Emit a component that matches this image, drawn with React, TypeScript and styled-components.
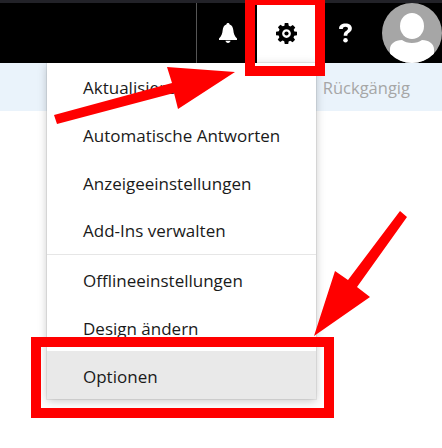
import React from "react"
import styled, { createGlobalStyle } from "styled-components"

const GlobalStyle = createGlobalStyle`
  html, body {
    margin: 0;
    padding: 0;
    background: white;
  }
  body {
    font-family: "Open Sans", "Noto Sans", sans-serif;
  }
`

const Page = styled.div`
  position: relative;
  width: 442px;
  height: 448px;
  overflow: hidden;
  background: white;
`

const TopBar = styled.header`
  height: 63px;
  box-sizing: border-box;
  border-top: 3px solid #222228;
  background: black;
  display: flex;
  justify-content: flex-end;
`

const Separator = styled.div`
  width: 1px;
  margin-right: 1px;
  background: #555;
`

const IconButton = styled.button<{ $active?: boolean }>`
  width: 59px;
  padding: 0;
  border: 0;
  display: flex;
  align-items: center;
  justify-content: center;
  color: ${(p) => (p.$active ? "black" : "white")};
  background: ${(p) => (p.$active ? "white" : "black")};
`

const Avatar = styled.div`
  width: 60px;
  height: 60px;
  margin-left: 7px;
  border-radius: 50%;
  overflow: hidden;
  background: #a6a6a6;
`

const SubBar = styled.div`
  height: 48px;
  background: #eaf3fb;
  display: flex;
  align-items: center;
  justify-content: flex-end;
  padding-right: 32px;
  color: #a6a6a6;
  font-size: 16.5px;
`

const Menu = styled.ul`
  position: absolute;
  left: 47px;
  top: 63px;
  width: 269px;
  margin: 0;
  padding: 0;
  list-style: none;
  background: white;
  box-shadow: 0 0 0 1px rgba(0, 0, 0, 0.07), 0 2px 9px rgba(0, 0, 0, 0.22);
`

const MenuItem = styled.li<{ $hover?: boolean; $divided?: boolean; $low?: boolean }>`
  height: 48px;
  box-sizing: border-box;
  padding-left: 36px;
  padding-top: ${(p) => (p.$low ? "2px" : "0")};
  display: flex;
  align-items: center;
  font-size: 17px;
  color: #1a1a1a;
  background: ${(p) => (p.$hover ? "#e9e9e9" : "white")};
  border-bottom: ${(p) => (p.$divided ? "1px solid #e6e6e6" : "0")};
`

const Marker = styled.div<{ $x: number; $y: number; $w: number; $h: number; $top: number }>`
  position: absolute;
  left: ${(p) => p.$x}px;
  top: ${(p) => p.$y}px;
  width: ${(p) => p.$w}px;
  height: ${(p) => p.$h}px;
  box-sizing: border-box;
  border: 10px solid #ff0000;
  border-top-width: ${(p) => p.$top}px;
`

const ArrowLayer = styled.svg`
  position: absolute;
  left: 0;
  top: 0;
`

const menuItems = [
  { label: "Aktualisieren" },
  { label: "Automatische Antworten" },
  { label: "Anzeigeeinstellungen" },
  { label: "Add-Ins verwalten", divided: true },
  { label: "Offlineeinstellungen", low: true },
  { label: "Design ändern", low: true },
  { label: "Optionen", hover: true, low: true },
]

const Bell = () => (
  <svg width="18" height="20" viewBox="0 0 18 20" fill="currentColor">
    <path d="M9 0c.9 0 1.500.6 1.600 1.400C13 2 14 4.200 14.300 7c.3 3.400 1.300 6.300 3.700 8.500V17H0v-1.500C2.400 13.300 3.400 10.400 3.700 7 4 4.200 5 2 7.400 1.400 7.500.6 8.100 0 9 0z" />
    <path d="M6.500 17.800h5c-.2 1.300-1.200 2.200-2.500 2.200s-2.300-.9-2.500-2.200z" />
  </svg>
)

const Gear = () => (
  <svg width="21" height="21" viewBox="0 0 24 24" fill="currentColor" fillRule="evenodd">
    <path d="M10 0h4l.6 3.200 1.900.8 2.700-1.800 2.800 2.800-1.800 2.700.8 1.900L24 10v4l-3.200.6-.8 1.900 1.800 2.700-2.800 2.800-2.700-1.800-1.900.8L14 24h-4l-.6-3.200-1.900-.8-2.700 1.800-2.800-2.800 1.800-2.700-.8-1.900L0 14v-4l3.200-.6.800-1.900-1.800-2.700 2.800-2.800 2.700 1.800 1.900-.8L10 0zM12 7a5 5 0 1 0 0 10 5 5 0 0 0 0-10z" />
    <circle cx="12" cy="12" r="2.400" />
  </svg>
)

const Help = () => (
  <svg width="15" height="20" viewBox="0 0 16 22" fill="currentColor">
    <path d="M1 5.500C1 2.500 4 .5 8 .5c4.200 0 7 2.200 7 5.400 0 2.500-1.400 3.700-3 4.800-1.400 1-2 1.500-2 3.300H6c0-2.800.9-4 2.600-5.200 1.300-.9 2.100-1.500 2.100-2.700 0-1.300-1.100-2.100-2.700-2.100-1.700 0-2.800.9-3 2.500H1z" />
    <circle cx="8" cy="19" r="2.500" />
  </svg>
)

const Person = () => (
  <svg width="60" height="60" viewBox="0 0 60 60" fill="white">
    <ellipse cx="30" cy="23" rx="12" ry="13" />
    <path d="M8 60V46c0-5 5-9 12-9 2.500 1.800 6 3 10 3s7.500-1.200 10-3c7 0 12 4 12 9v14z" />
  </svg>
)

export default function App() {
  return (
    <Page>
      <GlobalStyle />
      <TopBar>
        <Separator />
        <IconButton>
          <Bell />
        </IconButton>
        <IconButton $active>
          <Gear />
        </IconButton>
        <IconButton>
          <Help />
        </IconButton>
        <Avatar>
          <Person />
        </Avatar>
      </TopBar>
      <SubBar>Rückgängig</SubBar>
      <Menu>
        {menuItems.map((item) => (
          <MenuItem key={item.label} $hover={item.hover} $divided={item.divided} $low={item.low}>
            {item.label}
          </MenuItem>
        ))}
      </Menu>
      <Marker $x={245} $y={0} $w={80} $h={76} $top={5} />
      <Marker $x={31} $y={337} $w={303} $h={81} $top={10} />
      <ArrowLayer width="442" height="448">
        <polygon fill="#ff0000" points="235,72 167,67 172,83 54,115 57,124 174,93 178,109" />
        <polygon fill="#ff0000" points="400,211 407,217 357,287 370,297 314,336 335,271 348,280" />
      </ArrowLayer>
    </Page>
  )
}
